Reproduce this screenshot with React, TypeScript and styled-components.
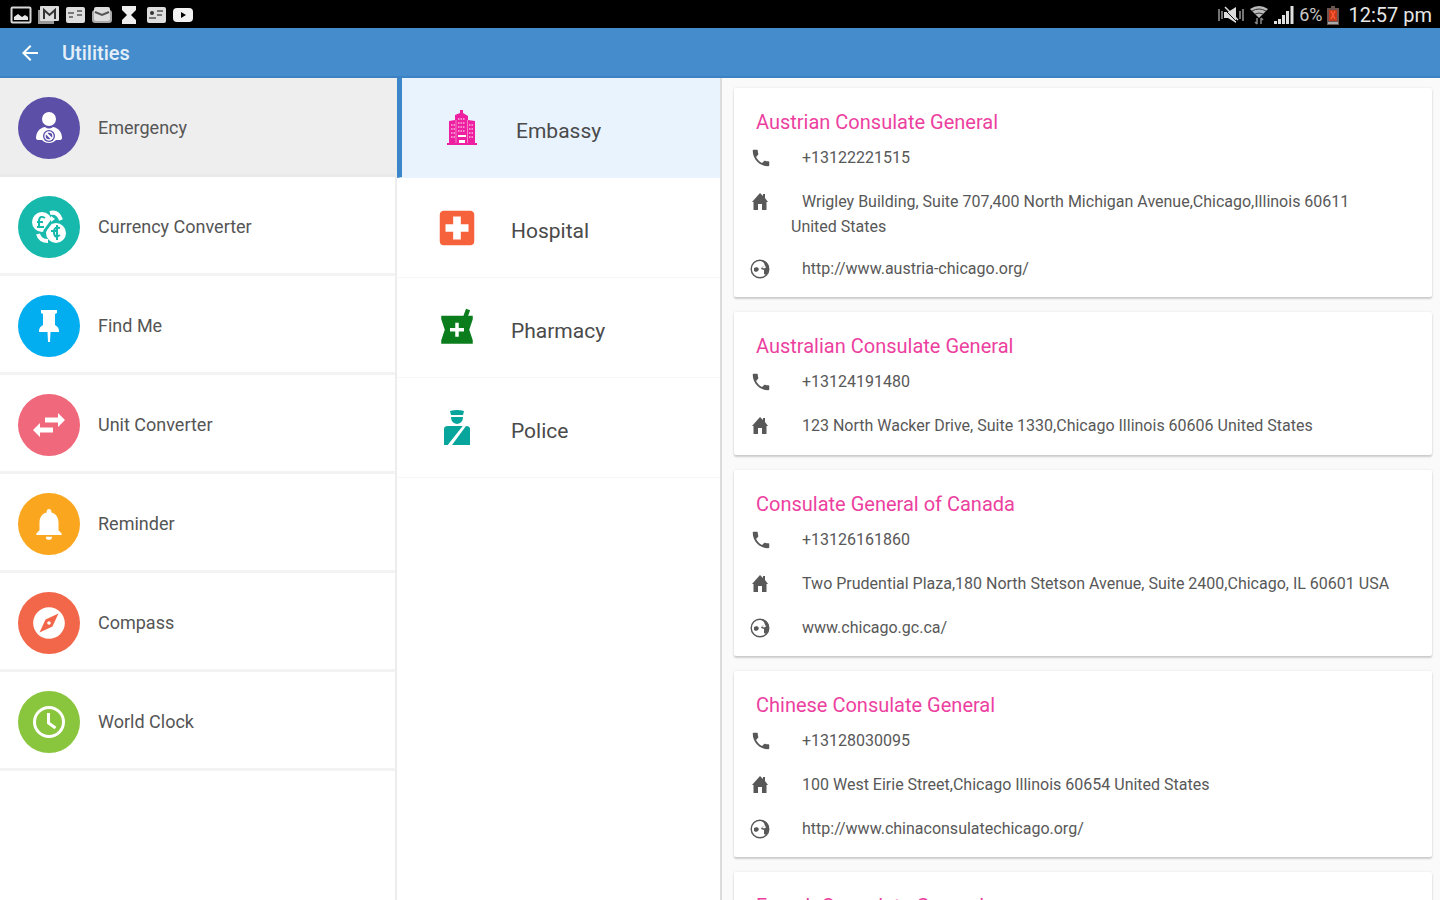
import React from "react";
import styled, { createGlobalStyle } from "styled-components";
import { MdLocalHospital, MdLocalPharmacy, MdNotifications, MdExplore, MdPhone, MdArrowBack } from "react-icons/md";

const GlobalStyle = createGlobalStyle`
  *, *::before, *::after { box-sizing: border-box; }
  body { margin: 0; background: #fff; font-family: Roboto, "Liberation Sans", sans-serif; }
  h1, h2, p, ul { margin: 0; padding: 0; }
  ul { list-style: none; }
  svg { display: block; flex: none; }
`;

const Screen = styled.div`
  display: flex;
  flex-direction: column;
  height: 100vh;
  overflow: hidden;
`;

const StatusBar = styled.div`
  display: flex;
  align-items: center;
  justify-content: space-between;
  flex: none;
  height: 28px;
  padding: 2px 8px 0 10px;
  background: #000;
  color: #e6e6e6;
`;

const StatusIcons = styled.div`
  display: flex;
  align-items: center;
  gap: 5px;
`;

const StatusInfo = styled.div`
  display: flex;
  align-items: center;
  gap: 5px;
`;

const BatteryLevel = styled.span`
  font-size: 18px;
  line-height: 24px;
  color: #c8c8c8;
`;

const Clock = styled.time`
  padding-left: 4px;
  font-size: 20px;
  line-height: 28px;
`;

const AppBar = styled.header`
  display: flex;
  align-items: center;
  gap: 20px;
  flex: none;
  height: 50px;
  padding: 2px 18px 0;
  background: #448ccb;
  border-bottom: 2px solid #3c82c2;
  color: #fff;
`;

const BackButton = styled.button`
  display: flex;
  padding: 0;
  border: 0;
  background: none;
  color: inherit;
  cursor: pointer;
`;

const AppTitle = styled.h1`
  font-size: 20px;
  font-weight: 500;
  line-height: 24px;
  color: #e4eff9;
`;

const Columns = styled.div`
  display: grid;
  grid-template-columns: 397fr 325fr 718fr;
  flex: 1;
  min-height: 0;
`;

const UtilityNav = styled.nav`
  border-right: 2px solid #ededed;
  overflow: hidden;
`;

const UtilityButton = styled.button<{ $active?: boolean }>`
  display: flex;
  align-items: center;
  gap: 18px;
  width: 100%;
  height: 99px;
  padding: 3px 18px 0;
  border: 0;
  border-bottom: 3px solid ${(p) => (p.$active ? "#e9e9e9" : "#f3f3f3")};
  background: ${(p) => (p.$active ? "#eeeeee" : "#fff")};
  font: 400 18px/24px Roboto, sans-serif;
  color: #555;
  text-align: left;
  cursor: pointer;
`;

const Disc = styled.span<{ $color: string }>`
  display: grid;
  place-items: center;
  width: 62px;
  height: 62px;
  border-radius: 50%;
  background: ${(p) => p.$color};
  color: #fff;
`;

const CategoryNav = styled.nav`
  border-right: 2px solid #dcdcdc;
  overflow: hidden;
`;

const CategoryButton = styled.button<{ $active?: boolean }>`
  display: flex;
  align-items: center;
  gap: 34px;
  width: 100%;
  height: 100px;
  padding: 6px 40px 0;
  border: 0;
  border-left: ${(p) => (p.$active ? "5px solid #3a86c8" : "0")};
  border-bottom: 1px solid ${(p) => (p.$active ? "#e9f3fe" : "#f7f7f7")};
  background: ${(p) => (p.$active ? "#e9f3fe" : "#fff")};
  font: 400 21px/26px Roboto, sans-serif;
  color: #4a4a4a;
  text-align: left;
  cursor: pointer;
`;

const CategoryIcon = styled.span<{ $color: string }>`
  display: flex;
  align-items: center;
  justify-content: center;
  width: 40px;
  height: 50px;
  padding-bottom: 6px;
  color: ${(p) => p.$color};
`;

const Results = styled.main`
  display: flex;
  flex-direction: column;
  gap: 15px;
  padding: 10px 8px 10px 12px;
  background: #fafafa;
  overflow-y: auto;
  scrollbar-width: none;
`;

const Card = styled.article`
  flex: none;
  padding: 20px 38px 7px 16px;
  border-radius: 2px;
  background: #fff;
  box-shadow: 0 2px 2px rgba(0, 0, 0, 0.17), 0 0 3px rgba(0, 0, 0, 0.08);
`;

const CardTitle = styled.h2`
  padding-left: 6px;
  font-size: 20px;
  font-weight: 400;
  line-height: 28px;
  color: #ec3fa0;
`;

const ContactRow = styled.li`
  display: grid;
  grid-template-columns: 22px 1fr;
  gap: 19px;
  min-height: 44px;
  padding: 9px 0 8px;
  color: #585858;
`;

const WebsiteRow = styled(ContactRow)`
  min-height: 43px;
`;

const RowIcon = styled.span`
  display: grid;
  place-items: center;
  width: 20px;
  height: 25px;
`;

const ContactText = styled.p`
  font-size: 16px;
  line-height: 25px;
  text-indent: 11px;
`;

const ContactLink = styled.a`
  color: inherit;
  text-decoration: none;
`;

const PersonIcon = () => (
  <svg width="30" height="34" viewBox="0 0 30 34" aria-hidden="true">
    <circle cx="15" cy="8" r="7" fill="#fff" />
    <path d="M11 16C5 17 2 22 2 27q0 2 3 2h3a9 8 0 0 0 14 0h3q3 0 3-2c0-5-3-10-9-11q-4 3-8 0z" fill="#fff" />
    <circle cx="15" cy="25" r="6" fill="#5b4fa8" />
    <circle cx="15" cy="25" r="4" fill="none" stroke="#fff" strokeWidth="1.4" />
    <path d="M12 22l6 6" stroke="#fff" strokeWidth="2" />
  </svg>
);

const CurrencyIcon = () => (
  <svg width="36" height="34" viewBox="0 0 36 34" fill="none" aria-hidden="true">
    <circle cx="11" cy="12" r="10" fill="#fff" />
    <path d="M19 3q8-2 11 7M7 24q2 7 10 7" stroke="#fff" strokeWidth="4" />
    <circle cx="25" cy="23" r="10" fill="#fff" />
    <path d="M14 8q-5-3-6 2 0 4 0 6M6 12h6M6 17h7" stroke="#16b9ac" strokeWidth="2" />
    <path d="M29 18q-6-2-6 4 0 7 6 3M20 21h6M26 15v15" stroke="#16b9ac" strokeWidth="2" />
    <path d="M23 8l-10 14" stroke="#16b9ac" strokeWidth="3" />
    <path d="M20 6l4 3-4 3" fill="#fff" />
  </svg>
);

const PinIcon = () => (
  <svg width="22" height="32" viewBox="0 0 22 32" fill="#fff" aria-hidden="true">
    <path d="M3 0h16v3l-2 1v11q4 2 4 6v1h-8.500l-.5 10h-2l-.5-10H1v-1q0-4 4-6V4L3 3z" />
  </svg>
);

const SwapIcon = () => (
  <svg width="32" height="24" viewBox="0 0 32 24" fill="#fff" aria-hidden="true">
    <path d="M12 4.500h13V0l7 7-7 7V9.500H12zM20 14.500H7V10l-7 7 7 7v-4.500h13z" />
  </svg>
);

const ClockIcon = () => (
  <svg width="34" height="34" viewBox="0 0 34 34" fill="none" stroke="#fff" aria-hidden="true">
    <circle cx="17" cy="17" r="14.500" strokeWidth="3" />
    <path d="M16.500 8v10l7 5" strokeWidth="3" />
  </svg>
);

const EmbassyIcon = () => (
  <svg width="30" height="36" viewBox="0 0 30 36" aria-hidden="true">
    <path d="M0 33h2V11l6-1V5l5-2V0h3v3l5 3v4l7 1v22h2v2H0z" fill="currentColor" />
    <path d="M4 15h4M4 19h4M4 23h4M4 27h4M22 15h4M22 19h4M22 23h4M22 27h4M11 9h7M11 13h7M11 17h7M11 21h7" stroke="#f9b5dc" strokeWidth="1.500" strokeDasharray="1.500 1" />
    <path d="M11 25h8v2h-8zM12 30h6v3h-6z" fill="#fff" />
    <path d="M9 10v23M20.500 10v23" stroke="#f47fc2" />
  </svg>
);

const PoliceIcon = () => (
  <svg width="28" height="36" viewBox="0 0 28 36" fill="currentColor" aria-hidden="true">
    <path d="M7 1q7-2 14 0l-1 4H8zM8 7h12q0 6-6 7-6-1-6-7z" />
    <path d="M1 35V19q0-3 4-3h15L5 35z" />
    <path d="M23 16q4 0 4 3v16H9z" />
    <path d="M21 16L6 35" stroke="#fff" strokeWidth="2" />
  </svg>
);

const HomeIcon = () => (
  <svg width="16" height="17" viewBox="0 0 16 17" fill="currentColor" aria-hidden="true">
    <path d="M8 0l3 3V1h2v4l3 4h-1.500v8H10v-6H6v6H1.500V9H0z" />
  </svg>
);

const GlobeIcon = () => (
  <svg width="20" height="20" viewBox="0 0 20 20" aria-hidden="true">
    <circle cx="10" cy="10" r="8.800" fill="none" stroke="currentColor" strokeWidth="1.400" />
    <path d="M4 9l3-1 2 2-1 2-2 1-2-1z" fill="currentColor" />
    <path d="M11 1.500q5 0 7.500 5l.5 5-3 4.500-2-1v-4l-3-1 1-2 3-1-1-3z" fill="currentColor" />
    <path d="M12 8.500l3-2 1 2-2 1z" fill="#fff" />
  </svg>
);

type StatusKind = "picture" | "mail" | "card" | "inbox" | "hourglass" | "contact" | "video";

const statusDrawings: Record<StatusKind, React.ReactNode> = {
  picture: (
    <>
      <rect x="1.500" y="2.500" width="19" height="15" rx="1" fill="none" stroke="#d8d8d8" strokeWidth="2" />
      <path d="M4 15v-3l4-3 4 3 3-2 3 2v3z" fill="#e8e8e8" />
    </>
  ),
  mail: (
    <>
      <path d="M1 5h3v11h13v3H1z" fill="#999" />
      <rect x="3" y="1" width="19" height="15" rx="1" fill="#ddd" />
      <path d="M7 14V5l5.500 5L18 5v9" fill="none" stroke="#333" strokeWidth="2" />
    </>
  ),
  card: (
    <>
      <rect x="2" y="2" width="19" height="16" rx="2" fill="#ddd" />
      <path d="M4 8h6M13 6h5M13 10h5M5 12h4" stroke="#777" strokeWidth="2" />
    </>
  ),
  inbox: (
    <>
      <rect x="1" y="5" width="20" height="13" rx="3" fill="#aaa" />
      <rect x="3" y="2" width="16" height="14" rx="2" fill="#ddd" />
      <path d="M4 7l7 3 7-3" fill="none" stroke="#555" strokeWidth="2" />
    </>
  ),
  hourglass: <path d="M4 1h14v4l-5 5 5 5v4H4v-4l5-5-5-5z" fill="#eee" />,
  contact: (
    <>
      <rect x="2" y="2" width="19" height="16" rx="2" fill="#ddd" />
      <circle cx="7" cy="8" r="2" fill="#333" />
      <path d="M12 6h6M12 10h5M4 13h7" stroke="#777" strokeWidth="2" />
    </>
  ),
  video: (
    <>
      <rect x="1" y="3" width="20" height="14" rx="4" fill="#f2f2f2" />
      <path d="M9 7l5 3-5 3z" fill="#000" />
    </>
  ),
};

const StatusIcon = ({ kind }: { kind: StatusKind }) => (
  <svg width="22" height="20" viewBox="0 0 22 20" aria-hidden="true">
    {statusDrawings[kind]}
  </svg>
);

const MuteIcon = () => (
  <svg width="26" height="18" viewBox="0 0 26 18" aria-hidden="true">
    <path d="M1 3v12M4 5v8M22 5v8M25 3v12" stroke="#999" strokeWidth="1.500" />
    <path d="M6 6h4l8-5v16l-8-5H6z" fill="#ddd" />
    <path d="M6 3l13 13" stroke="#111" />
    <path d="M7 1l13 13" stroke="#ddd" strokeWidth="1.500" />
  </svg>
);

const WifiIcon = () => (
  <svg width="20" height="20" viewBox="0 0 20 20" fill="none" aria-hidden="true">
    <path d="M1 4q9-6 18 0l-9 9z" fill="#bbb" />
    <path d="M3 6q7-4 14 0M6 9q4-2 8 0" stroke="#333" />
    <path d="M8 13v6M6 17l2 2M12 19v-6M14 15l-2-2" stroke="#888" strokeWidth="1.500" />
  </svg>
);

const SignalIcon = () => (
  <svg width="20" height="18" viewBox="0 0 20 18" aria-hidden="true">
    <path d="M0 15h3v3H0zM4 13h3v5H4zM8 9h3v9H8zM12 5h3v13h-3zM16.500 0h3v18h-3z" fill="#e0e0e0" />
  </svg>
);

const BatteryIcon = () => (
  <svg width="12" height="19" viewBox="0 0 12 19" aria-hidden="true">
    <path d="M4 0h4v2h4v17H0V2h4z" fill="#6b5550" />
    <path d="M2 4h8v11H2z" fill="#c73a1e" />
    <path d="M1 16h10v2H1z" fill="#aaa" />
    <path d="M4 5l4 8M8 5l-4 8" stroke="#ff5a30" strokeWidth="1.500" />
  </svg>
);

const utilities = [
  { name: "Emergency", color: "#5b4fa8", icon: <PersonIcon /> },
  { name: "Currency Converter", color: "#16b9ac", icon: <CurrencyIcon /> },
  { name: "Find Me", color: "#02aef0", icon: <PinIcon /> },
  { name: "Unit Converter", color: "#f0687b", icon: <SwapIcon /> },
  { name: "Reminder", color: "#faa61f", icon: <MdNotifications size={38} /> },
  { name: "Compass", color: "#f26649", icon: <MdExplore size={38} /> },
  { name: "World Clock", color: "#8ac53e", icon: <ClockIcon /> },
];

const categories = [
  { name: "Embassy", color: "#ee1fa0", icon: <EmbassyIcon /> },
  { name: "Hospital", color: "#f5623c", icon: <MdLocalHospital size={46} /> },
  { name: "Pharmacy", color: "#0b7d1c", icon: <MdLocalPharmacy size={42} /> },
  { name: "Police", color: "#07a59b", icon: <PoliceIcon /> },
];

interface Consulate {
  name: string;
  phone: string;
  address: string;
  website?: string;
}

const consulates: Consulate[] = [
  {
    name: "Austrian Consulate General",
    phone: "+13122221515",
    address: "Wrigley Building, Suite 707,400 North Michigan Avenue,Chicago,Illinois 60611 United States",
    website: "http://www.austria-chicago.org/",
  },
  {
    name: "Australian Consulate General",
    phone: "+13124191480",
    address: "123 North Wacker Drive, Suite 1330,Chicago Illinois 60606 United States",
  },
  {
    name: "Consulate General of Canada",
    phone: "+13126161860",
    address: "Two Prudential Plaza,180 North Stetson Avenue, Suite 2400,Chicago, IL 60601 USA",
    website: "www.chicago.gc.ca/",
  },
  {
    name: "Chinese Consulate General",
    phone: "+13128030095",
    address: "100 West Eirie Street,Chicago Illinois 60654 United States",
    website: "http://www.chinaconsulatechicago.org/",
  },
];

const statusKinds: StatusKind[] = ["picture", "mail", "card", "inbox", "hourglass", "contact", "video"];

const ConsulateCard = ({ name, phone, address, website }: Consulate) => (
  <Card>
    <CardTitle>{name}</CardTitle>
    <ul>
      <ContactRow>
        <RowIcon><MdPhone size={22} /></RowIcon>
        <ContactText><ContactLink href={`tel:${phone}`}>{phone}</ContactLink></ContactText>
      </ContactRow>
      <ContactRow>
        <RowIcon><HomeIcon /></RowIcon>
        <ContactText>{address}</ContactText>
      </ContactRow>
      {website && (
        <WebsiteRow>
          <RowIcon><GlobeIcon /></RowIcon>
          <ContactText>
            <ContactLink href={website.startsWith("http") ? website : `http://${website}`}>{website}</ContactLink>
          </ContactText>
        </WebsiteRow>
      )}
    </ul>
  </Card>
);

export default function App() {
  return (
    <>
      <GlobalStyle />
      <Screen>
        <StatusBar>
          <StatusIcons>
            {statusKinds.map((kind) => <StatusIcon key={kind} kind={kind} />)}
          </StatusIcons>
          <StatusInfo>
            <MuteIcon />
            <WifiIcon />
            <SignalIcon />
            <BatteryLevel>6%</BatteryLevel>
            <BatteryIcon />
            <Clock>12:57 pm</Clock>
          </StatusInfo>
        </StatusBar>
        <AppBar>
          <BackButton aria-label="Back"><MdArrowBack size={24} /></BackButton>
          <AppTitle>Utilities</AppTitle>
        </AppBar>
        <Columns>
          <UtilityNav aria-label="Utilities">
            {utilities.map((item, index) => (
              <UtilityButton key={item.name} $active={index === 0}>
                <Disc $color={item.color}>{item.icon}</Disc>
                {item.name}
              </UtilityButton>
            ))}
          </UtilityNav>
          <CategoryNav aria-label="Emergency categories">
            {categories.map((item, index) => (
              <CategoryButton key={item.name} $active={index === 0}>
                <CategoryIcon $color={item.color}>{item.icon}</CategoryIcon>
                {item.name}
              </CategoryButton>
            ))}
          </CategoryNav>
          <Results>
            {consulates.map((item) => <ConsulateCard key={item.name} {...item} />)}
            <Card>
              <CardTitle>French Consulate General</CardTitle>
            </Card>
          </Results>
        </Columns>
      </Screen>
    </>
  );
}
